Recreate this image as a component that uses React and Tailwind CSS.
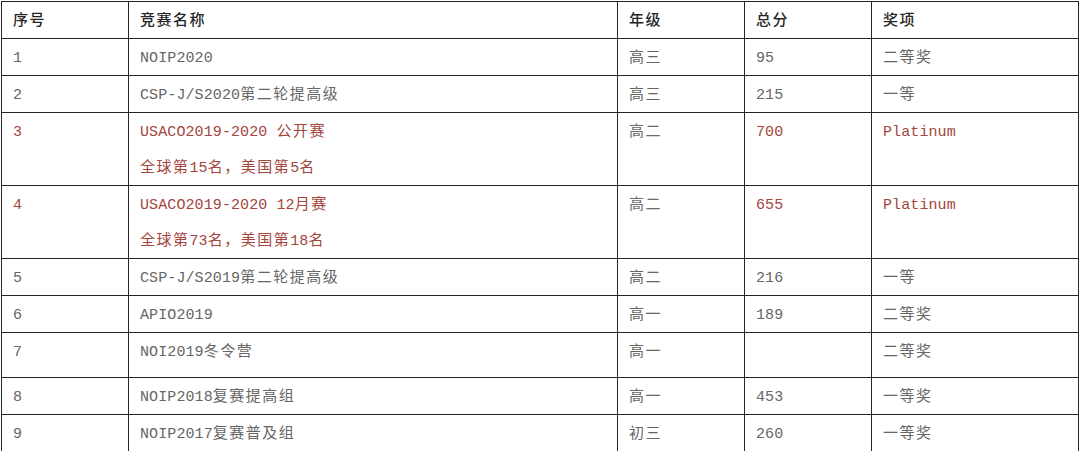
import React from 'react';

const rows = [
    { no: '1', name: ['NOIP2020'], grade: '高三', score: '95', award: '二等奖' },
    { no: '2', name: ['CSP-J/S2020第二轮提高级'], grade: '高三', score: '215', award: '一等' },
    { no: '3', name: ['USACO2019-2020 公开赛', '全球第15名，美国第5名'], grade: '高二', score: '700', award: 'Platinum', red: true },
    { no: '4', name: ['USACO2019-2020 12月赛', '全球第73名，美国第18名'], grade: '高二', score: '655', award: 'Platinum', red: true },
    { no: '5', name: ['CSP-J/S2019第二轮提高级'], grade: '高二', score: '216', award: '一等' },
    { no: '6', name: ['APIO2019'], grade: '高一', score: '189', award: '二等奖' },
    { no: '7', name: ['NOI2019冬令营'], grade: '高一', score: '', award: '二等奖', tall: true },
    { no: '8', name: ['NOIP2018复赛提高组'], grade: '高一', score: '453', award: '一等奖' },
    { no: '9', name: ['NOIP2017复赛普及组'], grade: '初三', score: '260', award: '一等奖' },
];

const T = ({ text }) => {
    const parts = text.split(/([\u3000-\u9fff\uff00-\uffef]+)/);
    return parts.map((p, i) =>
        /[\u3000-\u9fff\uff00-\uffef]/.test(p)
            ? <span key={i} className="tracking-[1.5px]">{p}</span>
            : <span key={i} className="tracking-[0.1px]">{p}</span>
    );
};

const cell = 'border border-[#262626] pl-[11px] align-top';

const Lines = ({ items }) => (
    <div className="translate-y-[2px]">
        {items.map((n, i) => (
            <div key={i}><T text={n} /></div>
        ))}
    </div>
);

export default function App() {
    return (
        <div className="w-[1080px] h-[451px] bg-white overflow-hidden pt-px pl-px">
            <table
                className="table-fixed border-collapse w-[1077px] text-[15px] leading-[36px]"
                style={{ fontFamily: '"Liberation Mono", "Noto Sans CJK SC", monospace' }}
            >
                <colgroup>
                    <col className="w-[127px]" />
                    <col className="w-[489px]" />
                    <col className="w-[127px]" />
                    <col className="w-[127px]" />
                    <col className="w-[207px]" />
                </colgroup>
                <thead>
                    <tr className="text-[#262626]">
                        {['序号', '竞赛名称', '年级', '总分', '奖项'].map((h) => (
                            <th key={h} className={`${cell} text-left font-medium`}><Lines items={[h]} /></th>
                        ))}
                    </tr>
                </thead>
                <tbody>
                    {rows.map((r) => {
                        const color = r.red ? 'text-[#a3453d]' : 'text-[#666666]';
                        const pad = r.tall ? ' pb-[8px]' : '';
                        return (
                            <tr key={r.no} className={color}>
                                <td className={cell + pad}><Lines items={[r.no]} /></td>
                                <td className={cell + pad}><Lines items={r.name} /></td>
                                <td className={`${cell}${pad} ${r.red ? 'text-[#6a6a6a]' : ''}`}><Lines items={[r.grade]} /></td>
                                <td className={cell + pad}><Lines items={[r.score]} /></td>
                                <td className={cell + pad}><Lines items={[r.award]} /></td>
                            </tr>
                        );
                    })}
                </tbody>
            </table>
        </div>
    );
}
